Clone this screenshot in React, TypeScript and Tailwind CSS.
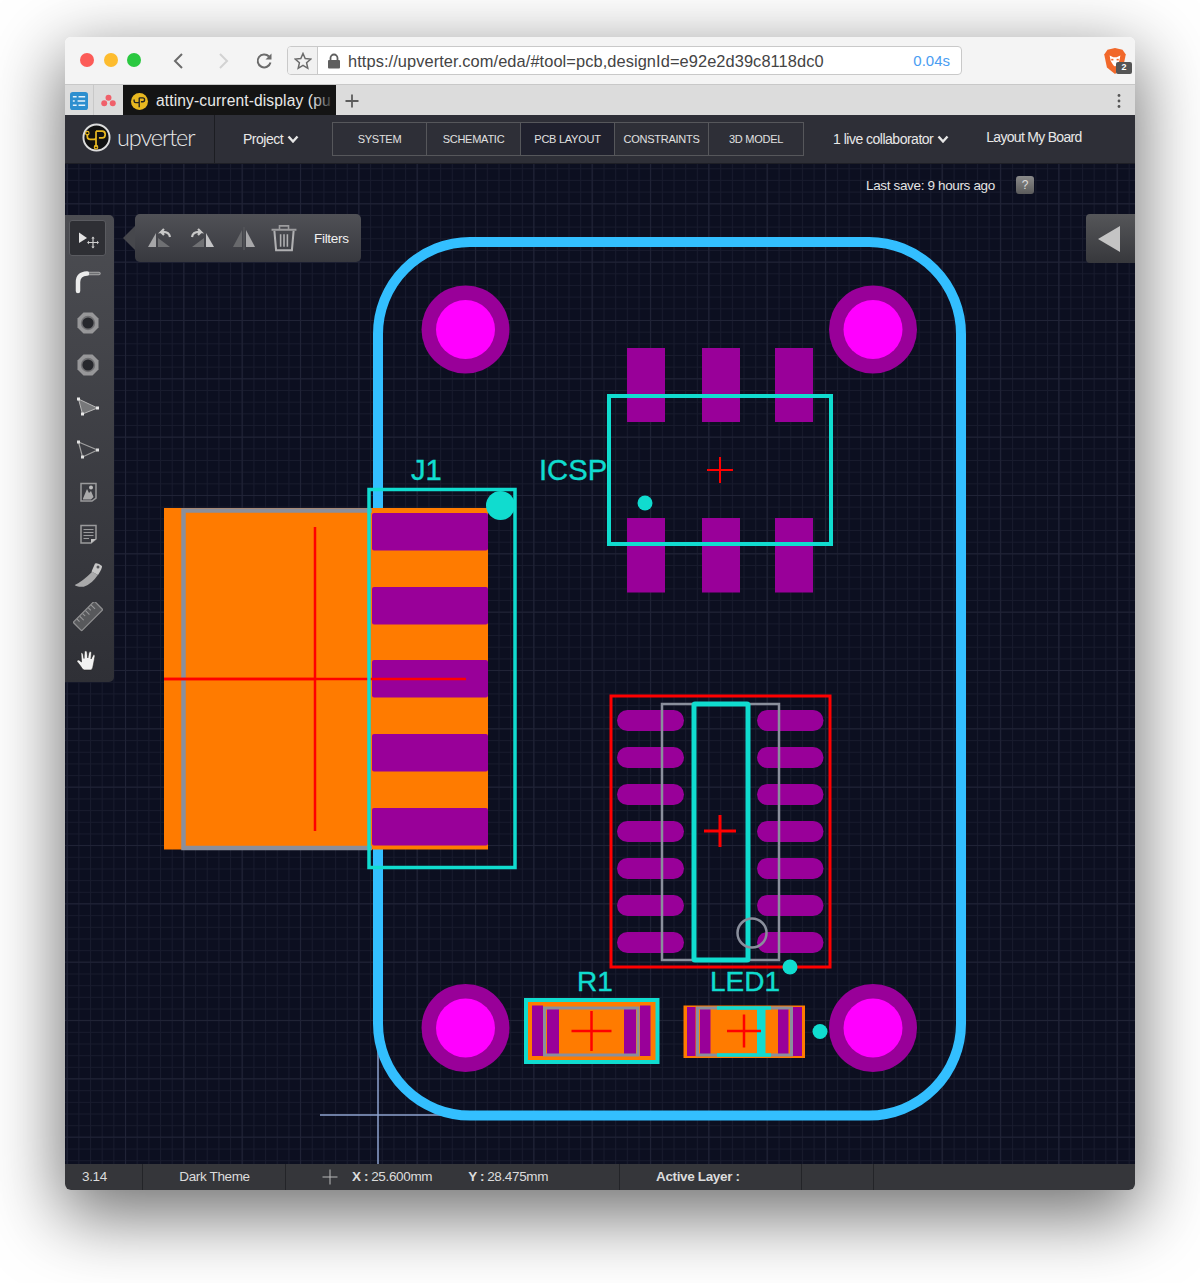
import React from "react";

const CYAN = "#10dccf";
const PURPLE = "#990099";
const ORANGE = "#ff7b00";
const RED = "#ff0000";
const GRAY = "#8a8f9c";
const LABEL = "'Liberation Sans', sans-serif";

function Cross({ x, y, rx, ry, w = 2 }: { x: number; y: number; rx: number; ry: number; w?: number }) {
  return (
    <g stroke={RED} strokeWidth={w}>
      <line x1={x - rx} y1={y} x2={x + rx} y2={y} />
      <line x1={x} y1={y - ry} x2={x} y2={y + ry} />
    </g>
  );
}

function Hole({ x, y }: { x: number; y: number }) {
  return (
    <g>
      <circle cx={x} cy={y} r={44} fill={PURPLE} />
      <circle cx={x} cy={y} r={29.5} fill="#ff00ff" />
    </g>
  );
}

function Label({ x, y, size, children }: { x: number; y: number; size: number; children: React.ReactNode }) {
  return (
    <text x={x} y={y} fill={CYAN} stroke={CYAN} strokeWidth="0.4" fontSize={size} fontFamily={LABEL}>
      {children}
    </text>
  );
}

function Board() {
  const soicY = [720.5, 757.5, 794.5, 831.5, 868.5, 905.5, 942.5];
  return (
    <svg viewBox="65 164 1070 1000" className="block w-full h-full">
      <defs>
        <pattern id="minor" x="136.7" y="273.3" width="11.67" height="11.67" patternUnits="userSpaceOnUse">
          <path d="M0.5 0V11.67M0 0.5H11.67" stroke="#181b2d" strokeWidth="1" fill="none" />
        </pattern>
        <pattern id="major" x="183.3" y="320" width="58.33" height="58.33" patternUnits="userSpaceOnUse">
          <path d="M0.5 0V58.33M0 0.5H58.33" stroke="#202336" strokeWidth="1" fill="none" />
        </pattern>
      </defs>
      <rect x="65" y="164" width="1070" height="1000" fill="#0c0f20" />
      <rect x="65" y="164" width="1070" height="1000" fill="url(#minor)" />
      <rect x="65" y="164" width="1070" height="1000" fill="url(#major)" />

      {/* crosshair */}
      <g stroke="#8ea3cf" strokeWidth="1.5">
        <line x1="378" y1="1050" x2="378" y2="1164" />
        <line x1="320" y1="1115" x2="445" y2="1115" />
      </g>

      {/* board outline */}
      <rect x="378" y="242" width="583" height="873.5" rx="92" fill="none" stroke="#33bfff" strokeWidth="10" />

      <Hole x={465.5} y={329.5} />
      <Hole x={873} y={329.5} />
      <Hole x={465.5} y={1028} />
      <Hole x={873} y={1028} />

      {/* ICSP */}
      {[627, 702, 775].map((x) => (
        <g key={x}>
          <rect x={x} y={348} width={38} height={74} fill={PURPLE} />
          <rect x={x} y={518} width={38} height={74.5} fill={PURPLE} />
        </g>
      ))}
      <rect x="609" y="396" width="222" height="148" fill="none" stroke={CYAN} strokeWidth="4" />
      <Cross x={720} y={470} rx={13} ry={13} />
      <circle cx="645" cy="503" r="7.5" fill={CYAN} />
      <Label x={539} y={479.5} size={29.2}>ICSP</Label>
      <Label x={411} y={479.5} size={29.2}>J1</Label>

      {/* J1 */}
      <rect x="164" y="508" width="324" height="341.5" fill={ORANGE} />
      <path d="M372 510.5H183.5V848H372" fill="none" stroke={GRAY} strokeWidth="4.5" />
      {[513, 587, 660, 734, 808].map((y) => (
        <rect key={y} x="372" y={y} width="116" height="37.5" rx="2" fill={PURPLE} />
      ))}
      <Cross x={315} y={679} rx={151} ry={152} w={2.5} />
      <line x1="164" y1="679" x2="315" y2="679" stroke={RED} strokeWidth="2.5" />
      <rect x="369" y="489.5" width="146" height="378" fill="none" stroke={CYAN} strokeWidth="3.5" />
      <circle cx="500.5" cy="505.5" r="14.5" fill={CYAN} />

      {/* SOIC */}
      {soicY.map((y) => (
        <g key={y}>
          <rect x="617" y={y - 10.5} width="67" height="21" rx="10.5" fill={PURPLE} />
          <rect x="757" y={y - 10.5} width="66.5" height="21" rx="10.5" fill={PURPLE} />
        </g>
      ))}
      <rect x="611" y="696" width="219" height="271" fill="none" stroke={RED} strokeWidth="3" />
      <rect x="662" y="704" width="117" height="256" fill="none" stroke={GRAY} strokeWidth="2.5" />
      <rect x="694" y="704" width="54" height="256" rx="1" fill="none" stroke={CYAN} strokeWidth="5" />
      <Cross x={720} y={831} rx={16} ry={16} w={3} />
      <circle cx="752" cy="933" r="14.5" fill="none" stroke={GRAY} strokeWidth="2.5" />
      <circle cx="790" cy="967" r="7.5" fill={CYAN} />

      {/* R1 */}
      <Label x={577} y={991} size={28}>R1</Label>
      <rect x="526" y="1000" width="131.5" height="62" fill={ORANGE} stroke={CYAN} strokeWidth="4" />
      <rect x="532" y="1005.5" width="11" height="50.5" fill={PURPLE} />
      <rect x="547" y="1008" width="12" height="47" fill={PURPLE} />
      <rect x="624" y="1008" width="12" height="47" fill={PURPLE} />
      <rect x="640" y="1005.5" width="10.5" height="50.5" fill={PURPLE} />
      <rect x="544.5" y="1008" width="93.5" height="47" fill="none" stroke={GRAY} strokeWidth="3" />
      <Cross x={591.5} y={1031} rx={20} ry={20} w={2.5} />

      {/* LED1 */}
      <Label x={710} y={991} size={28}>LED1</Label>
      <rect x="683.5" y="1005.5" width="121.5" height="52.5" fill={ORANGE} />
      <rect x="687" y="1007" width="8.5" height="49" fill={PURPLE} />
      <rect x="700" y="1009" width="10.5" height="45" fill={PURPLE} />
      <rect x="778" y="1009" width="10.5" height="45" fill={PURPLE} />
      <rect x="793" y="1007" width="9" height="49" fill={PURPLE} />
      <rect x="697.5" y="1008" width="94" height="47" fill="none" stroke={GRAY} strokeWidth="3" />
      <path d="M717 1008H771M717 1055H771" stroke={CYAN} strokeWidth="3.5" />
      <rect x="757" y="1008" width="8.5" height="47" fill={CYAN} />
      <Cross x={744} y={1031} rx={17} ry={16.5} w={2.5} />
      <circle cx="820" cy="1031.5" r="7.5" fill={CYAN} />
    </svg>
  );
}

function ToolIcon({ dy = 0, children }: { dy?: number; children: React.ReactNode }) {
  return (
    <div className="h-[42px] w-[49px] pr-[4px] flex items-center justify-center">
      <svg width="30" height="30" viewBox="0 0 30 30">
        <g transform={`translate(0 ${dy})`}>{children}</g>
      </svg>
    </div>
  );
}

function ToolRail() {
  return (
    <div className="absolute left-0 top-[51px] w-[49px] h-[467px] rounded-r-[5px] bg-gradient-to-b from-[#4c4d52] to-[#2f3036] pt-[5px] flex flex-col items-center">
      <div className="w-[37px] h-[36px] rounded-[3px] border border-[#5a5b60] bg-[#2e2f34] flex items-center justify-center mb-[4px] ml-[-4px]">
        <svg width="30" height="30" viewBox="0 0 30 30">
          <path d="M6 9.5L14 15L6 20Z" fill="#e4e4e4" />
          <path d="M20 14.5V24.5M15 19.5H25" stroke="#cfcfcf" strokeWidth="1.2" />
          <path d="M20 13.5L18.3 15.5H21.7ZM20 25.5L18.3 23.5H21.7ZM14 19.5L16 17.8V21.2ZM26 19.5L24 17.8V21.2Z" fill="#cfcfcf" />
        </svg>
      </div>
      <ToolIcon dy={1}>
        <path d="M14 6.5H26" stroke="#a4a4a6" strokeWidth="3.4" strokeLinecap="round" />
        <path d="M14 6.5H26" stroke="#6e6f72" strokeWidth="1.4" strokeLinecap="round" />
        <path d="M5 24V15Q5 7 14 6.5" stroke="#ececec" strokeWidth="4.5" strokeLinecap="round" fill="none" />
      </ToolIcon>
      <ToolIcon>
        <path d="M10.5 4.5H19.5L25.5 10.5V19.5L19.5 25.5H10.5L4.5 19.5V10.5Z" fill="#979799" />
        <circle cx="15" cy="15" r="7.2" fill="#707073" />
        <circle cx="15" cy="15" r="5.6" fill="#26272c" />
      </ToolIcon>
      <ToolIcon>
        <path d="M10.5 4.5H19.5L25.5 10.5V19.5L19.5 25.5H10.5L4.5 19.5V10.5Z" fill="#979799" />
        <circle cx="15" cy="15" r="7.2" fill="#707073" />
        <circle cx="15" cy="15" r="5.6" fill="#26272c" />
      </ToolIcon>
      <ToolIcon dy={1}>
        <path d="M5.5 6L24.5 15L9.5 21Z" fill="#77787a" stroke="#b8b8b8" strokeWidth="1" />
        <rect x="4" y="4.5" width="3" height="3" fill="#e8e8e8" />
        <rect x="23" y="13.5" width="3" height="3" fill="#e8e8e8" />
        <rect x="8" y="19.5" width="3" height="3" fill="#e8e8e8" />
      </ToolIcon>
      <ToolIcon dy={1}>
        <path d="M5.5 7L24.5 15L9.5 22Z" fill="none" stroke="#a0a0a0" strokeWidth="1.2" />
        <rect x="4" y="5.5" width="3" height="3" fill="#e0e0e0" />
        <rect x="23" y="13.5" width="3" height="3" fill="#e0e0e0" />
        <rect x="8" y="20.5" width="3" height="3" fill="#e0e0e0" />
      </ToolIcon>
      <ToolIcon dy={1}>
        <path d="M8 6.5H23V21L19 24H8Z" fill="none" stroke="#9a9a9c" strokeWidth="1.5" />
        <path d="M10 21.5L14 12L16 16L18 14L20.5 20L18 22.5H10Z" fill="#aaaaab" />
        <circle cx="18" cy="10.5" r="2" fill="#bdbdbd" />
      </ToolIcon>
      <ToolIcon dy={1}>
        <path d="M8 6.5H23V20L18 24H8Z" fill="none" stroke="#9a9a9c" strokeWidth="1.5" />
        <path d="M10.5 10.5H20.5M10.5 13.5H20.5M10.5 16.5H20.5M10.5 19.5H16" stroke="#9a9a9c" strokeWidth="1.2" />
        <path d="M18 24V20H23Z" fill="#c4c4c4" />
      </ToolIcon>
      <ToolIcon>
        <path d="M19.2 11.7Q10 21 1.8 25Q3 27 10.8 26.7Q19 24 24.8 15Z" fill="#a9a9aa" />
        <path d="M18.5 11.5L22 3.5Q25 2.5 29 6Q29.5 8 25 15Z" fill="#c6c6c6" />
        <circle cx="25" cy="7" r="1.5" fill="#55565a" />
      </ToolIcon>
      <ToolIcon dy={-1}>
        <g transform="rotate(-45 15 15)">
          <rect x="0" y="9" width="30" height="12" rx="1" fill="#58595c" stroke="#8f8f91" strokeWidth="1.3" />
          <path d="M5 9.5V13M9 9.5V15M13 9.5V13M17 9.5V15M21 9.5V13M25 9.5V15" stroke="#9a9a9c" strokeWidth="1" />
        </g>
      </ToolIcon>
      <ToolIcon>
        <path
          d="M11 26Q9 25 7.5 22L4 17.5Q3.5 15.5 6 16L8.5 18L8 9.5Q8.5 8 10 9.5L11 14.5L11.5 7.5Q13 6 14 7.5L14.8 14L16 8Q17.5 7 18.5 8.5L18 15L20.5 10.5Q22 10 22 12L20.5 20Q20 24 18.5 26Z"
          fill="#f2f2f2"
          stroke="#222"
          strokeWidth="0.6"
        />
      </ToolIcon>
    </div>
  );
}

function ContextBar() {
  return (
    <div className="absolute left-[70px] top-[50px] w-[226px] h-[48px] rounded-[5px] bg-gradient-to-b from-[#505156] to-[#38393f] flex items-center pl-[11px]">
      <div className="absolute left-[-12px] top-[12px] w-0 h-0 border-y-[12px] border-y-transparent border-r-[12px] border-r-[#46474c]" />
      <svg width="28" height="28" viewBox="0 0 28 28" className="mr-[14px]">
        <path d="M2 23L10 9V23Z" fill="#a6a6a8" />
        <path d="M12 14L24 23H12Z" fill="#6f7073" />
        <path d="M24 13Q23 7 15 8L18 5M15 8L18 11" stroke="#c8c8c8" strokeWidth="2.2" fill="none" />
      </svg>
      <svg width="28" height="28" viewBox="0 0 28 28" className="mr-[14px]">
        <path d="M26 23L18 9V23Z" fill="#c4c4c6" />
        <path d="M16 14L4 23H16Z" fill="#6f7073" />
        <path d="M4 13Q5 7 13 8L10 5M13 8L10 11" stroke="#c8c8c8" strokeWidth="2.2" fill="none" />
      </svg>
      <svg width="28" height="28" viewBox="0 0 28 28" className="mr-[13px]">
        <path d="M3 23L12 6V23Z" fill="#68696c" />
        <path d="M25 23L16 6V23Z" fill="#a8a8aa" />
        <path d="M14 3V26" stroke="#55565a" strokeWidth="1.5" />
      </svg>
      <svg width="26" height="28" viewBox="2.5 2 23 24.5" className="mr-[17px]">
        <path d="M3 7H25" stroke="#9d9d9f" strokeWidth="1.8" />
        <path d="M10 7V3.5H18V7" stroke="#9d9d9f" strokeWidth="1.4" fill="none" />
        <path d="M5.5 8L7 25H21L22.5 8" stroke="#b0b0b2" strokeWidth="1.8" fill="none" />
        <path d="M11 11V22M14 11V22M17 11V22" stroke="#b0b0b2" strokeWidth="1.4" />
      </svg>
      <span className="pt-[2px] text-[13.5px] text-[#f0f0f0] tracking-[-0.3px]">Filters</span>
    </div>
  );
}

function NavTabs() {
  const tabs = ["SYSTEM", "SCHEMATIC", "PCB LAYOUT", "CONSTRAINTS", "3D MODEL"];
  return (
    <div className="flex h-[34px] border border-[#56575b]">
      {tabs.map((t, i) => (
        <div
          key={t}
          className={
            (i === 2 ? "bg-[#20212e] " : "") +
            (i < 4 ? "border-r border-[#56575b] " : "") +
            "w-[94px] pt-[1px] flex items-center justify-center text-[11px] text-[#e0e0e0] tracking-[-0.25px]"
          }
        >
          {t}
        </div>
      ))}
    </div>
  );
}

function Chevron() {
  return (
    <svg width="12" height="9" viewBox="0 0 12 9" className="ml-[4px]">
      <path d="M1.5 1.5L6 6.5L10.5 1.5" stroke="#e6e6e6" strokeWidth="2.4" fill="none" />
    </svg>
  );
}

function UpLogo() {
  return (
    <svg width="29" height="29" viewBox="0 0 30 30">
      <circle cx="15" cy="15" r="13.5" fill="#111" stroke="#dcdcdc" strokeWidth="2" />
      <path
        d="M5.5 11.5V14Q5.5 17 8.5 17H12.5Q14.5 17 14.5 15V8.5M14.5 8.5V25M14.5 8.5H21Q24 8.5 24 12Q24 15.5 21 15.5H17.5"
        stroke="#e8b820"
        strokeWidth="1.8"
        fill="none"
      />
      <circle cx="5.5" cy="10.5" r="1.8" fill="none" stroke="#e8b820" strokeWidth="1.2" />
      <circle cx="14.5" cy="25" r="1.8" fill="none" stroke="#e8b820" strokeWidth="1.2" />
    </svg>
  );
}

function BrowserChrome() {
  return (
    <>
      <div className="h-[48px] bg-[#f4f4f4] border-b border-[#c8c8c8] flex items-center relative">
        <div className="flex gap-[9.5px] ml-[15px] mb-[1px]">
          <div className="w-[14px] h-[14px] rounded-full bg-[#fc5b57]" />
          <div className="w-[14px] h-[14px] rounded-full bg-[#fdbc2e]" />
          <div className="w-[14px] h-[14px] rounded-full bg-[#2ac840]" />
        </div>
        <svg width="14" height="20" viewBox="0 0 14 20" className="ml-[30px] mt-[1px]">
          <path d="M11 3L4 10L11 17" stroke="#6b6b6b" strokeWidth="2" fill="none" />
        </svg>
        <svg width="14" height="20" viewBox="0 0 14 20" className="ml-[32px] mt-[1px]">
          <path d="M3 3L10 10L3 17" stroke="#d2d2d2" strokeWidth="2" fill="none" />
        </svg>
        <svg width="20" height="20" viewBox="0 0 20 20" className="ml-[24px] mt-[1px]">
          <path d="M15.5 11.5A6.5 6.5 0 1 1 14 5.5" stroke="#6b6b6b" strokeWidth="2" fill="none" />
          <path d="M16.5 2.5V8.5H10.5Z" fill="#6b6b6b" />
        </svg>
        <div className="ml-[12px] w-[675px] h-[29px] flex rounded-[4px] border border-[#c9c9c9] bg-white overflow-hidden">
          <div className="w-[30px] bg-[#f1f1f1] border-r border-[#c9c9c9] flex items-center justify-center">
            <svg width="18" height="18" viewBox="0 0 18 18">
              <path
                d="M9 1.5L11.2 6.6L16.8 7.1L12.6 10.8L13.8 16.3L9 13.4L4.2 16.3L5.4 10.8L1.2 7.1L6.8 6.6Z"
                fill="none"
                stroke="#6b6b6b"
                strokeWidth="1.5"
              />
            </svg>
          </div>
          <svg width="14" height="16" viewBox="0 0 14 16" className="ml-[9px] self-center">
            <path d="M3.5 7V5A3.5 3.5 0 0 1 10.5 5V7" stroke="#5f5f5f" strokeWidth="1.8" fill="none" />
            <rect x="1" y="7" width="12" height="8.5" rx="1" fill="#5f5f5f" />
          </svg>
          <span className="ml-[7px] self-center pt-[1px] text-[16.4px] tracking-[0.08px] text-[#444] whitespace-nowrap">
            https://upverter.com/eda/#tool=pcb,designId=e92e2d39c8118dc0
          </span>
          <span className="ml-auto mr-[11px] self-center pt-[1px] text-[15px] text-[#4a9df2]">0.04s</span>
        </div>
        <svg width="24" height="28" viewBox="1 0 22 26" className="ml-[141px]">
          <path d="M12 1L19 2.5L22 7L19.5 19L12 25L4.5 19L2 7L5 2.5Z" fill="#f1682a" />
          <path d="M7 8L10.5 9.5H13.5L17 8L16 13L13.5 17L12 18L10.5 17L8 13Z" fill="#fff" />
          <rect x="8.5" y="11" width="2" height="1.5" fill="#f1682a" />
          <rect x="13.5" y="11" width="2" height="1.5" fill="#f1682a" />
        </svg>
        <div className="absolute left-[1051px] top-[25px] w-[16px] h-[12px] rounded-[2px] bg-[#555] text-white text-[9px] font-bold flex items-center justify-center">
          2
        </div>
      </div>
      <div className="h-[30px] bg-[#dcdcdc] flex items-stretch relative">
        <div className="w-[29px] border-r border-[#c8c8c8] flex items-center pl-[5px] pt-[1px]">
          <svg width="18" height="18" viewBox="0 0 19 19">
            <rect width="19" height="19" rx="3" fill="#2d8fcf" />
            <path d="M3 5H7M9 5H16M3 9.5H5M8 9.5H16M3 14H7M9 14H16" stroke="#e6f2fa" strokeWidth="1.6" />
          </svg>
        </div>
        <div className="w-[29px] flex items-center justify-center pt-[1px]">
          <svg width="15" height="13" viewBox="0 0 16 14">
            <circle cx="8" cy="4" r="3.2" fill="#f0606a" />
            <circle cx="3.4" cy="10" r="3.2" fill="#f0606a" />
            <circle cx="12.6" cy="10" r="3.2" fill="#f0606a" />
          </svg>
        </div>
        <div className="relative w-[213px] bg-[#141414] flex items-center overflow-hidden pl-[8px] pt-[2px]">
          <div className="shrink-0 w-[17px] h-[17px] rounded-full bg-[#e8b820] flex items-center justify-center">
            <svg width="17" height="17" viewBox="0 0 30 30">
              <path
                d="M5.5 11.5V14Q5.5 17 8.5 17H12.5Q14.5 17 14.5 15V8.5M14.5 8.5V25M14.5 8.5H21Q24 8.5 24 12Q24 15.5 21 15.5H17.5"
                stroke="#222"
                strokeWidth="2.4"
                fill="none"
              />
            </svg>
          </div>
          <span className="ml-[8px] text-[15.6px] tracking-[0.12px] text-[#e8e8e8] whitespace-nowrap">attiny-current-display (pu</span>
          <div className="absolute right-0 top-0 bottom-0 w-[24px] bg-gradient-to-r from-transparent to-[#141414]" />
        </div>
        <svg width="16" height="16" viewBox="0 0 16 16" className="ml-[8px] self-center mt-[1px]">
          <path d="M8 1.5V14.5M1.5 8H14.5" stroke="#5c5c5c" strokeWidth="1.8" />
        </svg>
        <svg width="4" height="16" viewBox="0 0 4 16" className="absolute right-[14px] top-[8px]">
          <circle cx="2" cy="2.5" r="1.4" fill="#555" />
          <circle cx="2" cy="8" r="1.4" fill="#555" />
          <circle cx="2" cy="13.5" r="1.4" fill="#555" />
        </svg>
      </div>
    </>
  );
}

function AppHeader() {
  return (
    <div className="h-[49px] bg-[#2e2f37] border-b border-[#1e1f26] flex items-center text-[#e8e8e8]">
      <div className="w-[150px] h-full border-r border-[#1c1d22] flex items-center pl-[17px] pb-[3px]">
        <UpLogo />
        <span className="ml-[6px] font-['Lato',sans-serif] font-light text-[23.5px] leading-none tracking-[-1.1px] text-[#e8e8e8]">upverter</span>
      </div>
      <div className="w-[117px] flex items-center pl-[28px] text-[14px] tracking-[-0.5px]">
        Project
        <Chevron />
      </div>
      <NavTabs />
      <div className="ml-[29px] flex items-center text-[14px] tracking-[-0.5px] whitespace-nowrap">
        1 live collaborator
        <Chevron />
      </div>
      <div className="ml-[37px] mb-[3px] text-[14px] tracking-[-0.7px] whitespace-nowrap">Layout My Board</div>
    </div>
  );
}

function StatusBar() {
  return (
    <div className="h-[26px] bg-[#35363a] flex items-stretch text-[13.5px] text-[#dcdcdc] tracking-[-0.35px] whitespace-nowrap">
      <div className="w-[78px] border-r border-[#232428] flex items-center pl-[17px]">3.14</div>
      <div className="w-[143px] border-r border-[#232428] flex items-center justify-center pl-[1px]">Dark Theme</div>
      <div className="w-[334px] border-r border-[#232428] flex items-center pl-[36px]">
        <svg width="16" height="16" viewBox="0 0 16 16" className="mr-[14px]">
          <path d="M8 0.5V15.5M0.5 8H15.5" stroke="#b8b8b8" strokeWidth="1" />
        </svg>
        <span className="font-bold">X :</span>
        <span className="ml-[3px]">25.600mm</span>
        <span className="ml-[36px] font-bold">Y :</span>
        <span className="ml-[3px]">28.475mm</span>
      </div>
      <div className="w-[182px] border-r border-[#232428] flex items-center pl-[36px] font-bold">Active Layer :</div>
      <div className="w-[72px] border-r border-[#232428]" />
    </div>
  );
}

export default function App() {
  return (
    <div className="w-[1200px] h-[1283px] bg-white pt-[37px] pl-[65px] overflow-hidden font-['Liberation_Sans',Arial,sans-serif]">
      <div className="w-[1070px] rounded-[6px] overflow-hidden shadow-[0_22px_70px_4px_rgba(0,0,0,0.56)]">
        <BrowserChrome />
        <AppHeader />
        <div className="relative h-[1000px]">
          <Board />
          <div className="absolute left-[801px] top-[12px] text-[13.5px] tracking-[-0.35px] text-[#e4e4e4] whitespace-nowrap">
            Last save: 9 hours ago
          </div>
          <div className="absolute left-[951px] top-[12px] w-[18px] h-[18px] rounded-[3px] bg-gradient-to-b from-[#8a8a8a] to-[#5c5c5c] text-[#ddd] text-[12px] flex items-center justify-center">
            ?
          </div>
          <ToolRail />
          <ContextBar />
          <div className="absolute right-0 top-[50px] w-[49px] h-[49px] rounded-l-[4px] bg-gradient-to-b from-[#555659] to-[#37383c] flex items-center justify-center pr-[3px]">
            <svg width="22" height="26" viewBox="0 0 22 26">
              <path d="M22 0V26L0 13Z" fill="#c4c4c4" />
            </svg>
          </div>
        </div>
        <StatusBar />
      </div>
    </div>
  );
}
